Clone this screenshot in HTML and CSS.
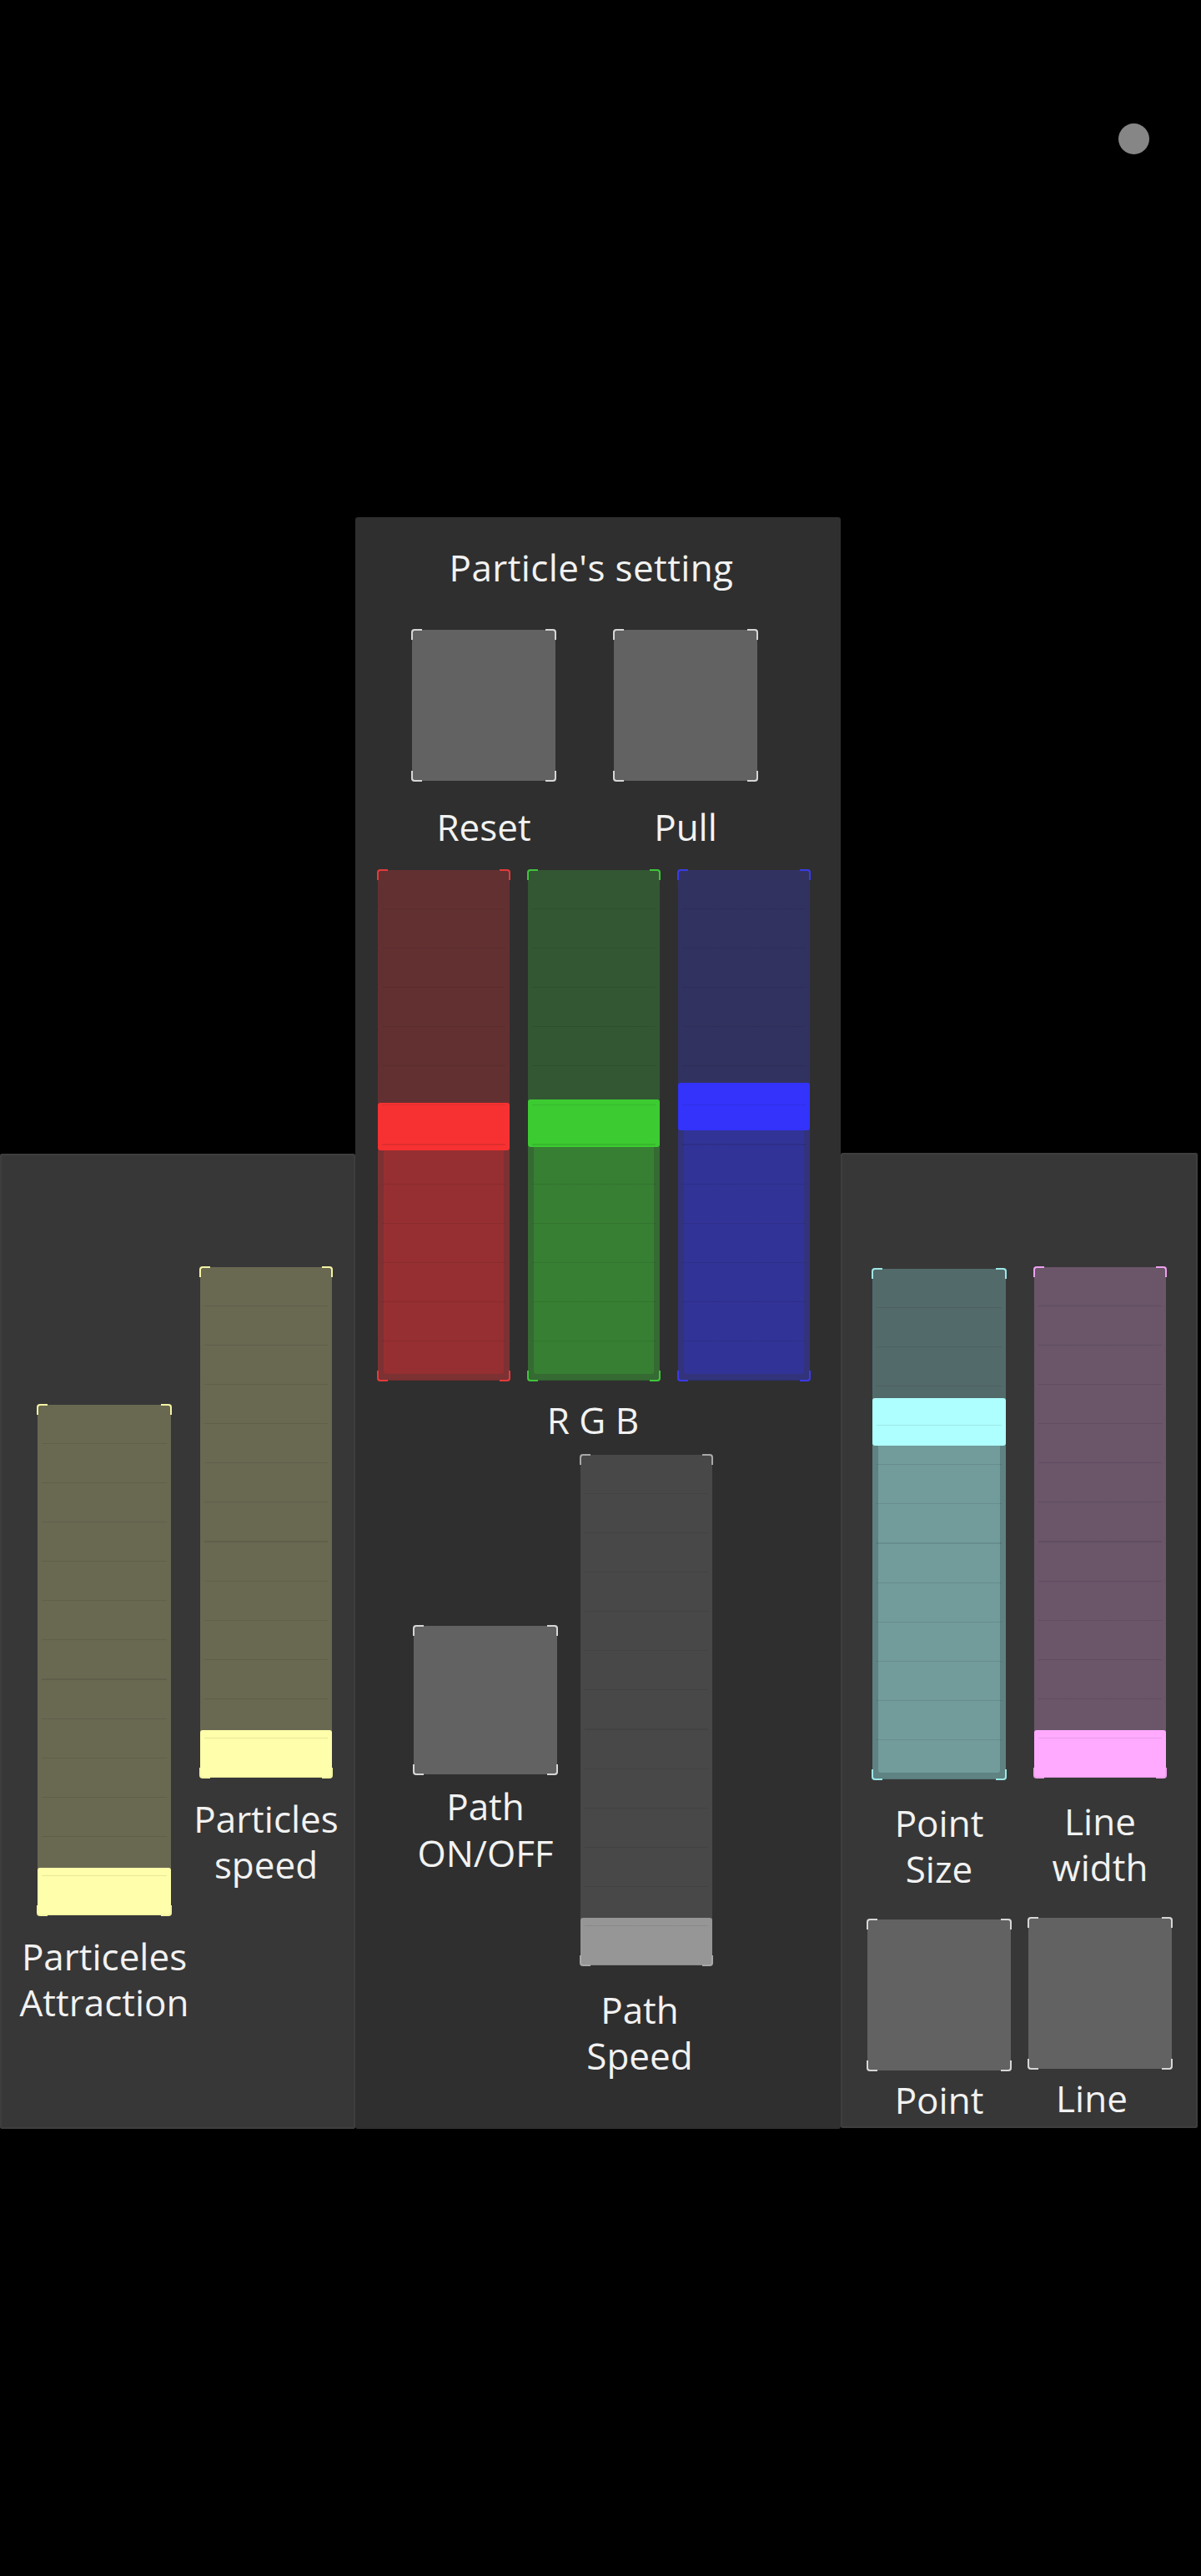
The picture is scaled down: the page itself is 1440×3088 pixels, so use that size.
FILE: index.html
```html
<!DOCTYPE html>
<html lang="en">
<head>
<meta charset="utf-8">
<title>Particle's setting</title>
<link rel="stylesheet" href="styles.css">
</head>
<body>
<div class="page">
  <div class="dot"></div>
  <div class="stage">
    <!-- Left panel -->
    <section class="panel side left">
      <div class="cols cols-left">
        <div class="col col-a">
          <div class="slider olive">
            <div class="sl-top" style="height:555px"></div>
            <div class="sl-handle"></div>
            <span class="c tl"></span><span class="c tr"></span><span class="c bl"></span><span class="c br"></span>
          </div>
          <div class="lbl lbl-a">Particeles<br>Attraction</div>
        </div>
        <div class="col col-b">
          <div class="slider olive">
            <div class="sl-top" style="height:555px"></div>
            <div class="sl-handle"></div>
            <span class="c tl"></span><span class="c tr"></span><span class="c bl"></span><span class="c br"></span>
          </div>
          <div class="lbl lbl-b">Particles<br>speed</div>
        </div>
      </div>
    </section>

    <!-- Center panel -->
    <section class="panel center">
      <h1 class="title">Particle's setting</h1>
      <div class="btn-row">
        <div class="btn"><span class="c tl"></span><span class="c tr"></span><span class="c bl"></span><span class="c br"></span></div>
        <div class="btn"><span class="c tl"></span><span class="c tr"></span><span class="c bl"></span><span class="c br"></span></div>
      </div>
      <div class="lbl-row">
        <div class="lbl">Reset</div>
        <div class="lbl">Pull</div>
      </div>
      <div class="rgb-row">
        <div class="slider red">
          <div class="sl-top" style="height:279px"></div>
          <div class="sl-handle"></div>
          <div class="sl-low"><div class="sl-fill"></div></div>
          <span class="c tl"></span><span class="c tr"></span><span class="c bl"></span><span class="c br"></span>
        </div>
        <div class="slider green">
          <div class="sl-top" style="height:275px"></div>
          <div class="sl-handle"></div>
          <div class="sl-low"><div class="sl-fill"></div></div>
          <span class="c tl"></span><span class="c tr"></span><span class="c bl"></span><span class="c br"></span>
        </div>
        <div class="slider blue">
          <div class="sl-top" style="height:255px"></div>
          <div class="sl-handle"></div>
          <div class="sl-low"><div class="sl-fill"></div></div>
          <span class="c tl"></span><span class="c tr"></span><span class="c bl"></span><span class="c br"></span>
        </div>
      </div>
      <div class="lbl rgb-label">R G B</div>
      <div class="path-row">
        <div class="col col-path-btn">
          <div class="btn btn-path"><span class="c tl"></span><span class="c tr"></span><span class="c bl"></span><span class="c br"></span></div>
          <div class="lbl lbl-path">Path<br>ON/OFF</div>
        </div>
        <div class="col col-path-sl">
          <div class="slider gray">
            <div class="sl-top" style="height:555px"></div>
            <div class="sl-handle"></div>
            <span class="c tl"></span><span class="c tr"></span><span class="c bl"></span><span class="c br"></span>
          </div>
          <div class="lbl lbl-speed">Path<br>Speed</div>
        </div>
      </div>
    </section>

    <!-- Right panel -->
    <section class="panel side right">
      <div class="cols cols-right">
        <div class="col col-ps">
          <div class="slider cyan">
            <div class="sl-top" style="height:155px"></div>
            <div class="sl-handle"></div>
            <div class="sl-low"><div class="sl-fill"></div></div>
            <span class="c tl"></span><span class="c tr"></span><span class="c bl"></span><span class="c br"></span>
          </div>
          <div class="lbl lbl-r">Point<br>Size</div>
          <div class="btn btn-r"><span class="c tl"></span><span class="c tr"></span><span class="c bl"></span><span class="c br"></span></div>
          <div class="lbl lbl-rb">Point</div>
        </div>
        <div class="col col-lw">
          <div class="slider pink">
            <div class="sl-top" style="height:555px"></div>
            <div class="sl-handle"></div>
            <span class="c tl"></span><span class="c tr"></span><span class="c bl"></span><span class="c br"></span>
          </div>
          <div class="lbl lbl-r">Line<br>width</div>
          <div class="btn btn-r"><span class="c tl"></span><span class="c tr"></span><span class="c bl"></span><span class="c br"></span></div>
          <div class="lbl lbl-rb shift-l">Line</div>
        </div>
      </div>
    </section>
  </div>
</div>
</body>
</html>
```

FILE: styles.css
```css
* { box-sizing: border-box; }

html, body {
  margin: 0;
  padding: 0;
  background: #000;
}

body {
  font-family: "Open Sans", "Noto Sans", "DejaVu Sans", sans-serif;
  color: #f2f2f2;
}

.page {
  position: relative;
  width: 1440px;
  height: 3088px;
  background: #000;
  overflow: hidden;
}

.dot {
  position: absolute;
  left: 1341px;
  top: 148px;
  width: 37px;
  height: 37px;
  border-radius: 50%;
  background: #868686;
}

.stage {
  display: flex;
  align-items: flex-start;
  padding-top: 620px;
}

.panel {
  border-radius: 3px;
}

.side {
  margin-top: 763px;
  height: 1169px;
  background: #373737;
  box-shadow: inset 0 0 0 2px #3e3e3e;
}

.left { width: 426px; }
.right { width: 428px; margin-top: 762px; }

.center {
  width: 582px;
  height: 1932px;
  background: #2f2f2f;
  padding-top: 32px;
}

/* text */
.title {
  margin: 0;
  font-size: 44px;
  font-weight: 400;
  line-height: 56px;
  text-align: center;
  padding-right: 16px;
  letter-spacing: 0.4px;
}

.lbl {
  font-size: 44px;
  line-height: 55px;
  text-align: center;
  white-space: nowrap;
}

/* columns */
.col {
  display: flex;
  flex-direction: column;
  align-items: center;
}

.cols {
  display: flex;
  align-items: flex-start;
}

.cols-left { padding-left: 45px; gap: 35px; }
.col-a { width: 160px; margin-top: 301px; }
.col-b { width: 158px; margin-top: 136px; }
.col-a .slider { width: 160px; }
.lbl-a { margin-top: 22px; line-height: 55px; }
.lbl-b { margin-top: 22px; line-height: 55px; }

.cols-right { padding-left: 38px; gap: 34px; }
.col-ps { width: 160px; margin-top: 139px; }
.col-lw { width: 158px; margin-top: 137px; }
.col-ps .slider { width: 160px; }
.lbl-r { margin-top: 25px; }
.btn-r { margin-top: 33px; width: 172px; height: 180px; background: #6a6a6a; flex: none; }
.lbl-rb { margin-top: 8px; }
.shift-l { margin-right: 20px; }

/* center rows */
.btn-row {
  display: flex;
  gap: 70px;
  padding-left: 68px;
  margin-top: 47px;
}

.lbl-row {
  display: flex;
  gap: 70px;
  padding-left: 68px;
  margin-top: 27px;
}
.lbl-row .lbl { width: 172px; line-height: 56px; }

.rgb-row {
  display: flex;
  gap: 22px;
  padding-left: 27px;
  margin-top: 24px;
}

.rgb-label {
  margin-top: 19px;
  line-height: 56px;
  padding-right: 12px;
}

.path-row {
  display: flex;
  align-items: flex-start;
  padding-left: 70px;
  gap: 28px;
  margin-top: 14px;
}
.col-path-btn { width: 172px; margin-top: 205px; }
.col-path-sl { width: 158px; }
.lbl-path { margin-top: 10px; line-height: 56px; }
.lbl-speed { margin-top: 26px; margin-right: 16px; }

/* buttons */
.btn {
  position: relative;
  width: 172px;
  height: 181px;
  background: #626262;
  border-radius: 2px;
  --corner: #d6d6d6;
}
.btn-path { height: 178px; }

/* sliders */
.slider {
  position: relative;
  display: flex;
  flex-direction: column;
  flex: none;
  width: 158px;
  height: 612px;
  background: var(--track);
  border-radius: 2px;
}

.slider::after {
  content: "";
  position: absolute;
  top: 0;
  bottom: 0;
  left: 5px;
  right: 5px;
  background: repeating-linear-gradient(to bottom,
    transparent 0, transparent 46px,
    rgba(0,0,0,0.09) 46px, rgba(0,0,0,0.09) 47.08px);
  pointer-events: none;
}

.sl-top { flex: none; }

.sl-handle {
  flex: none;
  height: 57px;
  background: var(--handle);
  border-radius: 3px;
}

.sl-low {
  flex: 1;
  display: flex;
  padding: 0 7px 8px;
  background: var(--mid);
}

.sl-fill {
  flex: 1;
  background: var(--fill);
  border-radius: 0 0 3px 3px;
}

/* corner brackets */
.c {
  position: absolute;
  width: 13px;
  height: 13px;
  border: 0 solid var(--corner);
  z-index: 2;
}
.c.tl { top: -1px; left: -1px; border-top-width: 2px; border-left-width: 2px; border-top-left-radius: 4px; }
.c.tr { top: -1px; right: -1px; border-top-width: 2px; border-right-width: 2px; border-top-right-radius: 4px; }
.c.bl { bottom: -1px; left: -1px; border-bottom-width: 2px; border-left-width: 2px; border-bottom-left-radius: 4px; }
.c.br { bottom: -1px; right: -1px; border-bottom-width: 2px; border-right-width: 2px; border-bottom-right-radius: 4px; }

/* colour themes */
.olive { --track: #696851; --handle: #fffeaa; --corner: #f4f3a4; }
.red   { --track: #633032; --mid: #7c3133; --fill: #962f31; --handle: #f73131; --corner: #e43a3a; }
.green { --track: #335733; --mid: #356a33; --fill: #377f33; --handle: #3ccb31; --corner: #3fc43a; }
.blue  { --track: #323261; --mid: #32337b; --fill: #323396; --handle: #3333fb; --corner: #3a3ae8; }
.gray  { --track: #484848; --handle: #969696; --corner: #a8a8a8; }
.cyan  { --track: #536a6a; --mid: #5f8282; --fill: #729b9b; --handle: #aeffff; --corner: #9de6e6; }
.pink  { --track: #6a5569; --handle: #ffaaff; --corner: #eea0ee; }
```
